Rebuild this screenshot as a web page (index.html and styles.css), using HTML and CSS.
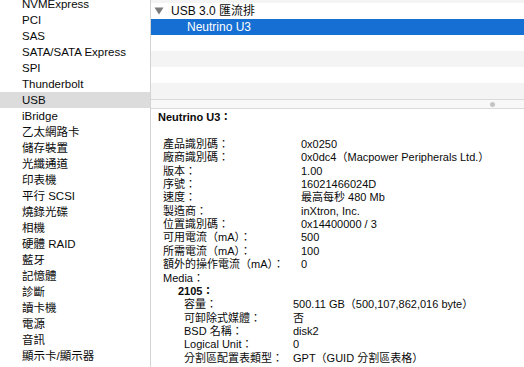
FILE: index.html
```html
<!DOCTYPE html>
<html lang="zh-Hant">
<head>
    <meta charset="UTF-8">
    <meta name="viewport" content="width=device-width, initial-scale=1.0">
    <title>系統資訊 - USB</title>
    <link rel="stylesheet" href="styles.css">
</head>
<body>
    <div class="window">
        <!-- left source list -->
        <ul class="sidebar">
            <li>NVMExpress</li>
            <li>PCI</li>
            <li>SAS</li>
            <li>SATA/SATA Express</li>
            <li>SPI</li>
            <li>Thunderbolt</li>
            <li class="active">USB</li>
            <li>iBridge</li>
            <li>乙太網路卡</li>
            <li>儲存裝置</li>
            <li>光纖通道</li>
            <li>印表機</li>
            <li>平行 SCSI</li>
            <li>燒錄光碟</li>
            <li>相機</li>
            <li>硬體 RAID</li>
            <li>藍牙</li>
            <li>記憶體</li>
            <li>診斷</li>
            <li>讀卡機</li>
            <li>電源</li>
            <li>音訊</li>
            <li>顯示卡/顯示器</li>
        </ul>

        <div class="content">
            <!-- device tree -->
            <div class="tree">
                <div class="row"></div>
                <div class="row">
                    <svg class="disclosure" width="10" height="8" viewBox="0 0 10 8"><path d="M0.5 0.5 L9.5 0.5 L5 7.5 Z" fill="#7b7b7b"/></svg>
                    <span>USB 3.0 匯流排</span>
                </div>
                <div class="row selected"><span class="child">Neutrino U3</span></div>
                <div class="row"></div>
                <div class="row"></div>
                <div class="row"></div>
                <div class="row"></div>
            </div>

            <div class="splitter"><span class="handle"></span></div>

            <!-- details of selected device -->
            <div class="detail">
                <div class="title">Neutrino U3：</div>
                <div class="props">
                    <span>產品識別碼：</span><span>0x0250</span>
                    <span>廠商識別碼：</span><span>0x0dc4（Macpower Peripherals Ltd.）</span>
                    <span>版本：</span><span>1.00</span>
                    <span>序號：</span><span>16021466024D</span>
                    <span>速度：</span><span>最高每秒 480 Mb</span>
                    <span>製造商：</span><span>inXtron, Inc.</span>
                    <span>位置識別碼：</span><span>0x14400000 / 3</span>
                    <span>可用電流（mA）：</span><span>500</span>
                    <span>所需電流（mA）：</span><span>100</span>
                    <span>額外的操作電流（mA）：</span><span>0</span>
                    <span>Media：</span><span></span>
                </div>
                <div class="media-name">2105：</div>
                <div class="props sub">
                    <span>容量：</span><span>500.11 GB（500,107,862,016 byte）</span>
                    <span>可卸除式媒體：</span><span>否</span>
                    <span>BSD 名稱：</span><span>disk2</span>
                    <span>Logical Unit：</span><span>0</span>
                    <span>分割區配置表類型：</span><span>GPT（GUID 分割區表格）</span>
                    <span>USB Interface：</span><span>0</span>
                </div>
            </div>
        </div>
    </div>
</body>
</html>
```

FILE: styles.css
```css
html, body {
    margin: 0;
    padding: 0;
    height: 100%;
    overflow: hidden;
    background-color: white;
}

body {
    font-family: "Liberation Sans", "Noto Sans CJK TC", sans-serif;
    color: #0a0a0a;
}

.window {
    display: flex;
    height: 367px;
    overflow: hidden;
}

/* source list */
.sidebar {
    list-style: none;
    margin: -4px 0 0 0;
    padding: 0;
    width: 150px;
    flex-shrink: 0;
    border-right: 1px solid #d4d4d4;
    background-color: white;
    font-size: 11.5px;
}

.sidebar li {
    height: 16px;
    line-height: 16px;
    padding-left: 22px;
    white-space: nowrap;
}

.sidebar li.active {
    background-color: #dcdcdc;
}

.content {
    flex: 1;
    display: flex;
    flex-direction: column;
    min-width: 0;
    overflow: hidden;
}

/* device tree */
.tree {
    height: 99px;
    flex-shrink: 0;
    overflow: hidden;
    font-size: 12px;
}

.tree .row {
    height: 16px;
    line-height: 16px;
    display: flex;
    align-items: center;
    padding-left: 3px;
    white-space: nowrap;
}

.tree .row:first-child {
    margin-top: -13px;
}

.tree .row:nth-child(odd) {
    background-color: #f4f4f4;
}

.tree .row.selected {
    background-color: #166fd3;
    color: white;
}

.disclosure {
    margin-right: 7px;
}

.child {
    padding-left: 33px;
}

.splitter {
    height: 8px;
    flex-shrink: 0;
    border-top: 1px solid #dadada;
    border-bottom: 1px solid #dadada;
    background-color: #f8f8f8;
    display: flex;
    align-items: center;
    justify-content: flex-end;
    padding-right: 29px;
}

.handle {
    width: 5px;
    height: 5px;
    border-radius: 50%;
    background-color: #c4c4c4;
}

/* detail text */
.detail {
    flex-shrink: 0;
    font-size: 11px;
    line-height: 13.375px;
    padding: 2px 0 0 7px;
    white-space: nowrap;
}

.title {
    font-weight: bold;
    margin-bottom: 13.375px;
}

.props {
    display: grid;
    grid-template-columns: 138px 1fr;
    margin-left: 5px;
}

.media-name {
    font-weight: bold;
    margin-left: 20px;
}

.props.sub {
    grid-template-columns: 109px 1fr;
    margin-left: 26px;
}
```
